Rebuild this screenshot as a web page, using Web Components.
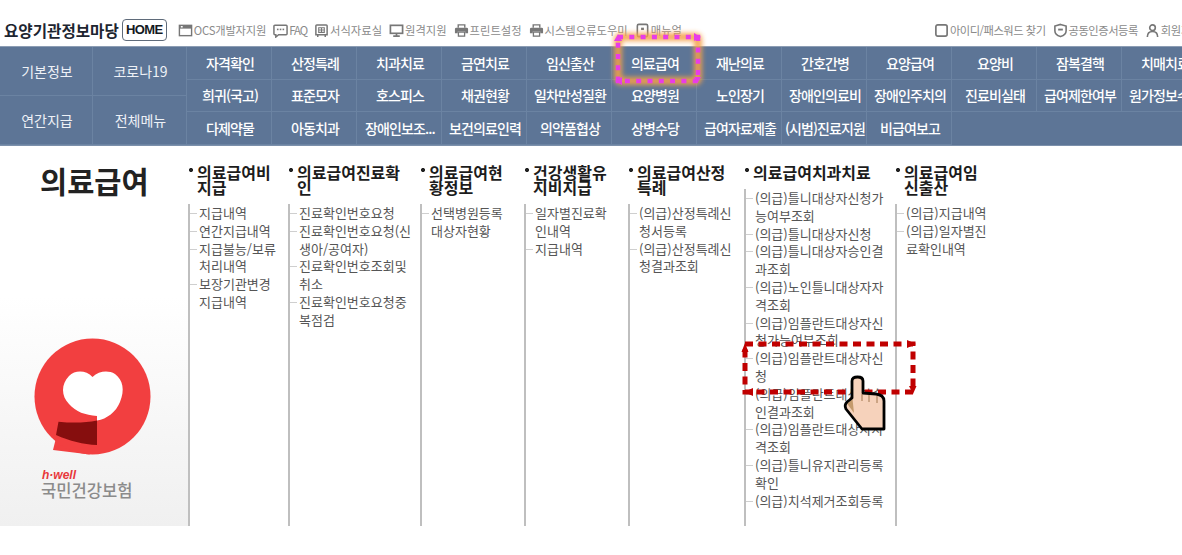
<!DOCTYPE html>
<html lang="ko">
<head>
<meta charset="utf-8">
<title>요양기관정보마당</title>
<style>
  html, body { margin: 0; padding: 0; background: #fff; }
  body {
    width: 1182px;
    height: 555px;
    overflow: hidden;
    position: relative;
    font-family: "Noto Sans CJK KR", "Noto Sans", sans-serif;
  }
</style>
</head>
<body>
<top-bar>
  <top-link icon="window" style="letter-spacing:-0.2px">OCS개발자지원</top-link>
  <top-link icon="chat" style="letter-spacing:-1px">FAQ</top-link>
  <top-link icon="form">서식자료실</top-link>
  <top-link icon="monitor">원격지원</top-link>
  <top-link icon="printer">프린트설정</top-link>
  <top-link icon="printer">시스템오류도우미</top-link>
  <top-link icon="manual">매뉴얼</top-link>
  <top-link icon="square" slot="right">아이디/패스워드 찾기</top-link>
  <top-link icon="shield" slot="right">공동인증서등록</top-link>
  <top-link icon="user" slot="right">회원가입</top-link>
</top-bar>

<main-nav>
  <nav-cell slot="side" kind="side">기본정보</nav-cell>
  <nav-cell slot="side" kind="side">코로나19</nav-cell>
  <nav-cell slot="side" kind="side">연간지급</nav-cell>
  <nav-cell slot="side" kind="side">전체메뉴</nav-cell>

  <nav-cell>자격확인</nav-cell><nav-cell>산정특례</nav-cell><nav-cell>치과치료</nav-cell><nav-cell>금연치료</nav-cell>
  <nav-cell>임신출산</nav-cell><nav-cell>의료급여</nav-cell><nav-cell>재난의료</nav-cell><nav-cell>간호간병</nav-cell>
  <nav-cell>요양급여</nav-cell><nav-cell>요양비</nav-cell><nav-cell>잠복결핵</nav-cell><nav-cell>치매치료</nav-cell>

  <nav-cell>희귀(국고)</nav-cell><nav-cell>표준모자</nav-cell><nav-cell>호스피스</nav-cell><nav-cell>채권현황</nav-cell>
  <nav-cell>일차만성질환</nav-cell><nav-cell>요양병원</nav-cell><nav-cell>노인장기</nav-cell><nav-cell>장애인의료비</nav-cell>
  <nav-cell>장애인주치의</nav-cell><nav-cell>진료비실태</nav-cell><nav-cell>급여제한여부</nav-cell><nav-cell>원가정보수집</nav-cell>

  <nav-cell>다제약물</nav-cell><nav-cell>아동치과</nav-cell><nav-cell>장애인보조...</nav-cell><nav-cell>보건의료인력</nav-cell>
  <nav-cell>의약품협상</nav-cell><nav-cell>상병수당</nav-cell><nav-cell>급여자료제출</nav-cell><nav-cell>(시범)진료지원</nav-cell>
  <nav-cell>비급여보고</nav-cell>
</main-nav>

<menu-section>
  <side-panel slot="side">의료급여</side-panel>

  <menu-column heading="의료급여비지급" style="--title-w:80px;--item-w:82px">
    <menu-item>지급내역</menu-item>
    <menu-item>연간지급내역</menu-item>
    <menu-item>지급불능/보류처리내역</menu-item>
    <menu-item>보장기관변경지급내역</menu-item>
  </menu-column>
  <menu-column heading="의료급여진료확인" style="--title-w:110px;--item-w:115px">
    <menu-item>진료확인번호요청</menu-item>
    <menu-item>진료확인번호요청(신생아/공여자)</menu-item>
    <menu-item>진료확인번호조회및취소</menu-item>
    <menu-item>진료확인번호요청중복점검</menu-item>
  </menu-column>
  <menu-column heading="의료급여현황정보" style="--title-w:80px;--item-w:80px">
    <menu-item>선택병원등록대상자현황</menu-item>
  </menu-column>
  <menu-column heading="건강생활유지비지급" style="--title-w:80px;--item-w:80px">
    <menu-item>일자별진료확인내역</menu-item>
    <menu-item>지급내역</menu-item>
  </menu-column>
  <menu-column heading="의료급여산정특례" style="--title-w:92px;--item-w:95px">
    <menu-item>(의급)산정특례신청서등록</menu-item>
    <menu-item>(의급)산정특례신청결과조회</menu-item>
  </menu-column>
  <menu-column heading="의료급여치과치료" style="--title-w:130px;--item-w:130px">
    <menu-item>(의급)틀니대상자신청가능여부조회</menu-item>
    <menu-item>(의급)틀니대상자신청</menu-item>
    <menu-item>(의급)틀니대상자승인결과조회</menu-item>
    <menu-item>(의급)노인틀니대상자자격조회</menu-item>
    <menu-item>(의급)임플란트대상자신청가능여부조회</menu-item>
    <menu-item>(의급)임플란트대상자신청</menu-item>
    <menu-item>(의급)임플란트대상자승인결과조회</menu-item>
    <menu-item>(의급)임플란트대상자자격조회</menu-item>
    <menu-item>(의급)틀니유지관리등록확인</menu-item>
    <menu-item>(의급)치석제거조회등록</menu-item>
  </menu-column>
  <menu-column heading="의료급여임신출산" style="--title-w:80px;--item-w:84px">
    <menu-item>(의급)지급내역</menu-item>
    <menu-item>(의급)일자별진료확인내역</menu-item>
  </menu-column>
</menu-section>

<guide-marks></guide-marks>

<script>
const ICONS = {
  window: '<rect x="1.5" y="2.5" width="13" height="11" fill="none" stroke-width="1.5"/><rect x="1.5" y="2.5" width="13" height="3.5" stroke="none"/><rect x="3" y="3.2" width="2" height="1.6" fill="#fff" stroke="none"/>',
  chat: '<path d="M2 2.5h12a1 1 0 0 1 1 1v8a1 1 0 0 1-1 1H6l-3 2.5v-2.5H2a1 1 0 0 1-1-1v-8a1 1 0 0 1 1-1z" fill="none" stroke-width="1.6"/><rect x="4.2" y="6" width="1.7" height="1.7" stroke="none"/><rect x="7.2" y="6" width="1.7" height="1.7" stroke="none"/><rect x="10.2" y="6" width="1.7" height="1.7" stroke="none"/>',
  form: '<path d="M3 2h10a1 1 0 0 1 1 1v9.500H2V3a1 1 0 0 1 1-1z" fill="none" stroke-width="1.6"/><path d="M5 5h6v5H5zM8 5v5M5 7.500h6" fill="none" stroke-width="1.1"/><path d="M4 12.500v2.500M12 12.500v2.500" fill="none" stroke-width="1.6"/>',
  monitor: '<rect x="1.5" y="2.5" width="13" height="8.5" fill="none" stroke-width="1.8"/><path d="M8 11v2.500M4.500 14h7" fill="none" stroke-width="1.8"/>',
  printer: '<path d="M4.500 5V2h7v3" fill="none" stroke-width="1.5"/><path d="M2.500 5h11a1.500 1.500 0 0 1 1.500 1.500V11h-3V9H4v2H1V6.500A1.500 1.500 0 0 1 2.500 5z" stroke="none"/><rect x="4.700" y="9.700" width="6.600" height="4.300" fill="none" stroke-width="1.400"/>',
  manual: '<rect x="2.500" y="1.500" width="11" height="13" rx="1.500" fill="none" stroke-width="1.700"/><rect x="6.500" y="5" width="3" height="2.500" stroke="none"/>',
  square: '<rect x="2" y="2" width="12" height="12" rx="2" fill="none" stroke-width="1.800"/>',
  shield: '<path d="M8 1.500l6 1.800v5c0 3-2.500 5.200-6 6.200-3.500-1-6-3.200-6-6.200v-5z" fill="none" stroke-width="1.700"/><rect x="5.500" y="6" width="5" height="2" stroke="none"/>',
  user: '<circle cx="8" cy="5" r="3" fill="none" stroke-width="1.700"/><path d="M2.500 15c0-4 2-6 5.500-6s5.500 2 5.500 6" fill="none" stroke-width="1.700"/>'
};

class TopLink extends HTMLElement {
  connectedCallback() {
    const icon = ICONS[this.getAttribute("icon")] || "";
    this.attachShadow({ mode: "open" }).innerHTML = `
      <style>
        :host { display: flex; align-items: center; gap: 1px; flex: none; color: #8a8a8a; font-size: 11.3px; line-height: 16px; white-space: nowrap; }
        :host([slot="right"]) { letter-spacing: -0.500px; }
        svg { width: 15px; height: 15px; fill: #777; stroke: #777; flex: none; }
      </style>
      <svg viewBox="0 0 16 16">${icon}</svg><slot></slot>`;
  }
}

class TopBar extends HTMLElement {
  constructor() {
    super();
    this.attachShadow({ mode: "open" }).innerHTML = `
      <style>
        :host { display: flex; align-items: center; height: 46px; box-sizing: border-box; padding: 14px 0 0 4px; overflow: hidden; white-space: nowrap; }
        .brand { font-size: 15.600px; font-weight: 700; color: #1d2530; flex: none; }
        .home {
          flex: none; margin-left: 3px; width: 45px; height: 22px; box-sizing: border-box;
          border: 1px solid #5f6b7a; border-radius: 4px; text-align: center;
          font: 700 13px/20px "Liberation Sans", sans-serif; letter-spacing: -0.600px; color: #141a22;
        }
        .links { display: flex; gap: 7px; margin-left: 11px; flex: none; }
        .right { margin-left: 252px; }
      </style>
      <span class="brand">요양기관정보마당</span>
      <span class="home">HOME</span>
      <div class="links"><slot></slot></div>
      <div class="links right"><slot name="right"></slot></div>`;
  }
}

class NavCell extends HTMLElement {
  constructor() {
    super();
    this.attachShadow({ mode: "open" }).innerHTML = `
      <style>
        :host {
          display: flex; align-items: center; justify-content: center;
          box-sizing: border-box; overflow: hidden; white-space: nowrap; padding-left: 2px;
          border-right: 1px solid #6b83a2; border-bottom: 1px solid #6b83a2;
          color: #fff; font-size: 14px; font-weight: 500; letter-spacing: -0.900px;
        }
        :host([kind="side"]) { font-weight: 400; letter-spacing: 0; color: #eef1f6; }
      </style>
      <slot></slot>`;
  }
}

class MainNav extends HTMLElement {
  constructor() {
    super();
    this.attachShadow({ mode: "open" }).innerHTML = `
      <style>
        :host {
          display: flex; width: 1207px; height: 100px; box-sizing: border-box;
          background: #5d7596; border-top: 1px solid #8c9db4; border-bottom: 1px solid #7c90ab;
        }
        .side { display: grid; grid-template-columns: 93px 94px; grid-template-rows: 1fr 1fr; width: 187px; flex: none; }
        .main { display: grid; grid-template-columns: repeat(12, 85px); grid-template-rows: repeat(3, 1fr); flex: none; }
      </style>
      <div class="side"><slot name="side"></slot></div>
      <div class="main"><slot></slot></div>`;
  }
}

class SidePanel extends HTMLElement {
  constructor() {
    super();
    this.attachShadow({ mode: "open" }).innerHTML = `
      <style>
        :host {
          display: flex; flex-direction: column; height: 380px; box-sizing: border-box;
          padding: 13px 0 26px; background: linear-gradient(#fff 0, #fff 150px, #f0f0f0 100%);
        }
        h1 { margin: 0 0 0 40px; font-size: 29.500px; line-height: 42px; font-weight: 700; color: #222; }
        .logo { margin-top: auto; }
        svg { display: block; }
        .en { margin: 15px 0 0 42px; font: italic 700 12px/10px "Liberation Sans", sans-serif; color: #e8383b; }
        .ko { margin: 0 0 0 41px; font-size: 16.600px; line-height: 20px; font-weight: 500; color: #8b8b8b; }
      </style>
      <h1><slot></slot></h1>
      <div class="logo">
        <svg width="160" height="125" viewBox="0 0 160 125">
          <path d="M53 120 L58 100 L90 124.500 Z" fill="#f23f40"/>
          <circle cx="92.500" cy="66.500" r="58" fill="#f23f40"/>
          <path d="M92.500 47 C86 40 75 40 69 46 C61 54 61 66 69 74 C76 82 85 85 97 86 L97 90.500 C107 89 116 82 120 72 C125 60 123 50 115 44 C108 40 99 41 92.500 47 Z" fill="#fff"/>
          <path d="M58.500 91.700 C72 93 85 93 97 90.500 L97 115 C83 114.500 70 111 56 105 Z" fill="#860e0e"/>
        </svg>
      </div>
      <div class="en">h·well</div>
      <div class="ko">국민건강보험</div>`;
  }
}

class MenuColumn extends HTMLElement {
  connectedCallback() {
    this.attachShadow({ mode: "open" }).innerHTML = `
      <style>
        :host { display: flex; flex-direction: column; box-sizing: border-box; padding-top: 19px; height: 380px; }
        h2 {
          margin: 0 0 9px; padding-left: 9px; box-sizing: border-box; width: calc(var(--title-w) + 9px);
          font-size: 16px; line-height: 15px; font-weight: 700; color: #1c1c1c;
          word-break: break-all;
          background: radial-gradient(circle at 3px 5px, #222 1.800px, transparent 2.300px) no-repeat;
        }
        ul { margin: 0; padding: 0; flex: 1; border-left: 2px solid #bfbfbf; list-style: none; }
      </style>
      <h2>${this.getAttribute("heading")}</h2>
      <ul><slot></slot></ul>`;
  }
}

class MenuItem extends HTMLElement {
  constructor() {
    super();
    this.attachShadow({ mode: "open" }).innerHTML = `
      <style>
        :host {
          display: block; box-sizing: border-box; padding-left: 9px; width: calc(var(--item-w) + 9px);
          font-size: 13px; line-height: 17.800px; color: #555; word-break: break-all;
          background: linear-gradient(#cfcfcf, #cfcfcf) 0 9px / 7px 1px no-repeat;
        }
      </style>
      <slot></slot>`;
  }
}

class MenuSection extends HTMLElement {
  constructor() {
    super();
    this.attachShadow({ mode: "open" }).innerHTML = `
      <style>
        :host {
          display: grid; grid-template-columns: 188px 100px 132px 104px 104px 116px 151px 1fr;
          height: 380px;
        }
      </style>
      <slot name="side"></slot><slot></slot>`;
  }
}

// the red and pink frames and the pointer drawn on top of the capture
class GuideMarks extends HTMLElement {
  constructor() {
    super();
    this.attachShadow({ mode: "open" }).innerHTML = `
      <style>
        :host { position: absolute; left: 0; top: 0; width: 1182px; height: 555px; pointer-events: none; }
        svg { position: absolute; overflow: visible; }
      </style>
      <svg style="left:0;top:0" width="1182" height="555" viewBox="0 0 1182 555">
        <defs>
          <filter id="glow" x="-20%" y="-30%" width="140%" height="160%">
            <feGaussianBlur stdDeviation="2.500"/>
          </filter>
        </defs>
        <rect x="618" y="37" width="80" height="44" rx="2" fill="none" stroke="#f5a04a" stroke-width="8" opacity=".9" filter="url(#glow)"/>
        <rect x="618" y="37" width="80" height="44" fill="none" stroke="#e83ce8" stroke-width="4.500" stroke-dasharray="5 6.300"/>
        <path d="M614 41l4-7 4 7zM694 33l7 4-7 4zM622 77l-7 4 7 4zM694 77h7l-3.500 6z" fill="#e83ce8"/>

        <rect x="745" y="344" width="168" height="48" fill="none" stroke="#c00000" stroke-width="5" stroke-dasharray="8 5.500"/>
        <path d="M741.500 352l3.500-9 3.500 9zM907 340l9 4-9 4zM753 388l-9 4 9 4zM909 386h7.500l-3.500 8z" fill="#c00000"/>
      </svg>
      <svg style="left:835px;top:375px" width="60" height="60" viewBox="0 0 60 60">
        <path d="M17 23V6Q17 2 22.500 2T28 6V18L41 19Q49 20 49 26V54H27L11 34Q9 30 12 27Z" fill="#f6d2bb"/>
        <path d="M17.500 24L12 28.500 19 38Z" fill="#c49a6c"/>
        <path d="M27 19v7M34 20v7M42 21v7" stroke="#b58d68" stroke-width="1.300" fill="none"/>
        <path d="M17 23V6Q17 2 22.500 2T28 6V18L41 19Q49 20 49 26V54H27L11 34Q9 30 12 27Z" fill="none" stroke="#000" stroke-width="2.800" stroke-linejoin="round"/>
      </svg>`;
  }
}

customElements.define("top-link", TopLink);
customElements.define("top-bar", TopBar);
customElements.define("nav-cell", NavCell);
customElements.define("main-nav", MainNav);
customElements.define("side-panel", SidePanel);
customElements.define("menu-column", MenuColumn);
customElements.define("menu-item", MenuItem);
customElements.define("menu-section", MenuSection);
customElements.define("guide-marks", GuideMarks);
</script>
</body>
</html>
